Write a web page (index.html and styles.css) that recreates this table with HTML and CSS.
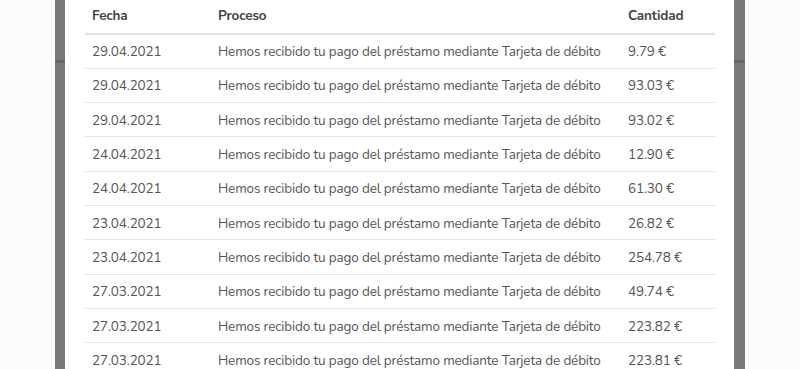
FILE: index.html
```html
<!DOCTYPE html>
<html lang="es">
<head>
<meta charset="utf-8">
<title>Movimientos</title>
<link rel="stylesheet" href="styles.css">
</head>
<body>
<div class="stage">
  <div class="rail"></div>
  <div class="modal">
    <table class="moves">
      <thead>
        <tr><th class="c-date">Fecha</th><th class="c-proc">Proceso</th><th class="c-amt">Cantidad</th></tr>
      </thead>
      <tbody>
        <tr><td>29.04.2021</td><td>Hemos recibido tu pago del préstamo mediante Tarjeta de débito</td><td>9.79 €</td></tr>
        <tr><td>29.04.2021</td><td>Hemos recibido tu pago del préstamo mediante Tarjeta de débito</td><td>93.03 €</td></tr>
        <tr><td>29.04.2021</td><td>Hemos recibido tu pago del préstamo mediante Tarjeta de débito</td><td>93.02 €</td></tr>
        <tr><td>24.04.2021</td><td>Hemos recibido tu pago del préstamo mediante Tarjeta de débito</td><td>12.90 €</td></tr>
        <tr><td>24.04.2021</td><td>Hemos recibido tu pago del préstamo mediante Tarjeta de débito</td><td>61.30 €</td></tr>
        <tr><td>23.04.2021</td><td>Hemos recibido tu pago del préstamo mediante Tarjeta de débito</td><td>26.82 €</td></tr>
        <tr><td>23.04.2021</td><td>Hemos recibido tu pago del préstamo mediante Tarjeta de débito</td><td>254.78 €</td></tr>
        <tr><td>27.03.2021</td><td>Hemos recibido tu pago del préstamo mediante Tarjeta de débito</td><td>49.74 €</td></tr>
        <tr><td>27.03.2021</td><td>Hemos recibido tu pago del préstamo mediante Tarjeta de débito</td><td>223.82 €</td></tr>
        <tr><td>27.03.2021</td><td>Hemos recibido tu pago del préstamo mediante Tarjeta de débito</td><td>223.81 €</td></tr>
      </tbody>
    </table>
  </div>
  <div class="rail"></div>
</div>
</body>
</html>
```
FILE: styles.css
```css
html, body {
  margin: 0;
  padding: 0;
  height: 100%;
  overflow: hidden;
  background: #fcfcfc;
}

.stage {
  display: flex;
  padding-left: 55px;
  height: 369px;
}

.rail {
  width: 10px;
  flex: none;
  background: linear-gradient(to bottom, #7a7a7a 0, #7a7a7a 60px, #666 60px, #666 63px, #7a7a7a 63px);
}

.rail:last-child {
  width: 11px;
}

.modal {
  width: 669px;
  flex: none;
  background: #fff;
  padding: 0 19px 0 20px;
  box-sizing: border-box;
}

.moves {
  width: 630px;
  table-layout: fixed;
  border-collapse: collapse;
  font-family: "Nunito", "Lato", "Open Sans", sans-serif;
  font-size: 13.5px;
  letter-spacing: -0.15px;
  color: #555;
}

.moves th,
.moves td {
  box-sizing: border-box;
  padding: 1px 7px 0;
  vertical-align: middle;
  white-space: nowrap;
}

.moves th {
  text-align: left;
  font-weight: 700;
  color: #444;
  height: 34px;
  padding-top: 0;
  padding-bottom: 2px;
  border-bottom: 2px solid #e2e2e2;
}

.moves td {
  height: 34.33px;
  border-bottom: 1px solid #e4e4e4;
}

.c-date { width: 126px; }
.c-amt { width: 94px; }
```
